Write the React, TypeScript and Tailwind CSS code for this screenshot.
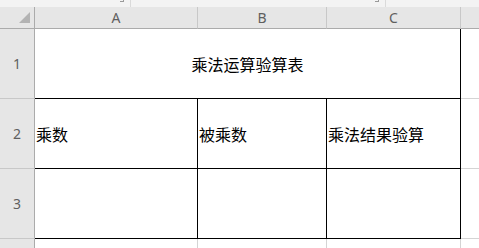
const cjk = "font-['Noto_Sans_CJK_SC',sans-serif] text-[16px] text-black";
const hdr = "font-['Noto_Sans','Liberation_Sans',sans-serif] text-[14px] text-[#5f5f5f]";

export default function App() {
  return (
    <div className="w-[479px] h-[248px] overflow-hidden bg-white">
      {/* top strip (formula bar edge) */}
      <div className="relative h-[7px] bg-[#f3f3f3]">
        <div className="absolute left-[120px] top-0 w-[4px] h-[2px] border-r border-b border-[#9a9a9a]" />
        <div className="absolute left-[130px] top-0 w-px h-[7px] bg-[#dadada]" />
        <div className="absolute left-[375px] top-0 w-[4px] h-[2px] border-r border-b border-[#9a9a9a]" />
        <div className="absolute left-[385px] top-0 w-px h-[7px] bg-[#dadada]" />
      </div>

      <div className="grid grid-cols-[35px_163px_129px_134px_1fr] grid-rows-[22px_70px_70px_70px_1fr] h-[241px]">
        {/* column headers */}
        <div className="relative bg-[#e6e6e6] border-r border-b border-[#ababab]">
          <div className="absolute left-[19px] top-[5px] w-0 h-0 border-l-[11px] border-l-transparent border-b-[11px] border-b-[#b3b3b3]" />
        </div>
        {["A", "B", "C"].map((c) => (
          <div key={c} className={`flex items-center justify-center bg-[#e6e6e6] border-r border-b border-r-[#c8c8c8] border-b-[#ababab] ${hdr}`}>
            {c}
          </div>
        ))}
        <div className="bg-[#e6e6e6] border-b border-[#ababab]" />

        {/* row 1 */}
        <div className={`flex items-center justify-center bg-[#e6e6e6] border-r border-b border-r-[#ababab] border-b-[#c8c8c8] ${hdr}`}>1</div>
        <div className={`col-span-3 flex items-center justify-center border-r border-b border-black ${cjk}`}>
          乘法运算验算表
        </div>
        <div className="border-b border-[#d4d4d4]" />

        {/* row 2 */}
        <div className={`flex items-center justify-center bg-[#e6e6e6] border-r border-b border-r-[#ababab] border-b-[#c8c8c8] ${hdr}`}>2</div>
        <div className={`flex items-center pl-[1px] border-r border-b border-black ${cjk}`}>乘数</div>
        <div className={`flex items-center pl-[1px] border-r border-b border-black ${cjk}`}>被乘数</div>
        <div className={`flex items-center pl-[1px] border-r border-b border-black ${cjk}`}>乘法结果验算</div>
        <div className="border-b border-[#d4d4d4]" />

        {/* row 3 */}
        <div className={`flex items-center justify-center bg-[#e6e6e6] border-r border-b border-r-[#ababab] border-b-[#c8c8c8] ${hdr}`}>3</div>
        <div className="border-r border-b border-black" />
        <div className="border-r border-b border-black" />
        <div className="border-r border-b border-black" />
        <div className="border-b border-[#d4d4d4]" />

        {/* row 4 */}
        <div className={`flex items-start justify-center pt-[3px] bg-[#e6e6e6] border-r border-[#ababab] ${hdr}`}>4</div>
        <div className="border-r border-[#d4d4d4]" />
        <div className="border-r border-[#d4d4d4]" />
        <div className="border-r border-[#d4d4d4]" />
        <div />
      </div>
    </div>
  );
}
